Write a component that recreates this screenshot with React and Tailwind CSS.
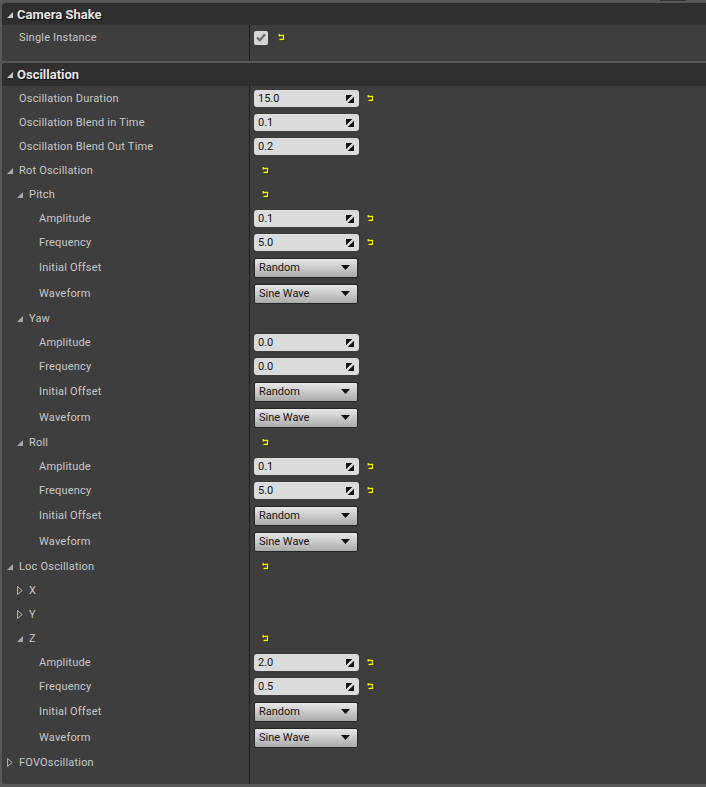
import React from "react";

// UE4-style details panel: Camera Shake / Oscillation
const rows = [
  { label: "Oscillation Duration", level: 0, num: "15.0", reset: true },
  { label: "Oscillation Blend in Time", level: 0, num: "0.1" },
  { label: "Oscillation Blend Out Time", level: 0, num: "0.2" },
  { label: "Rot Oscillation", level: 0, tri: "open", reset: true },
  { label: "Pitch", level: 1, tri: "open", reset: true },
  { label: "Amplitude", level: 2, num: "0.1", reset: true },
  { label: "Frequency", level: 2, num: "5.0", reset: true },
  { label: "Initial Offset", level: 2, combo: "Random" },
  { label: "Waveform", level: 2, combo: "Sine Wave" },
  { label: "Yaw", level: 1, tri: "open" },
  { label: "Amplitude", level: 2, num: "0.0" },
  { label: "Frequency", level: 2, num: "0.0" },
  { label: "Initial Offset", level: 2, combo: "Random" },
  { label: "Waveform", level: 2, combo: "Sine Wave" },
  { label: "Roll", level: 1, tri: "open", reset: true },
  { label: "Amplitude", level: 2, num: "0.1", reset: true },
  { label: "Frequency", level: 2, num: "5.0", reset: true },
  { label: "Initial Offset", level: 2, combo: "Random" },
  { label: "Waveform", level: 2, combo: "Sine Wave" },
  { label: "Loc Oscillation", level: 0, tri: "open", reset: true },
  { label: "X", level: 1, tri: "closed" },
  { label: "Y", level: 1, tri: "closed" },
  { label: "Z", level: 1, tri: "open", reset: true },
  { label: "Amplitude", level: 2, num: "2.0", reset: true },
  { label: "Frequency", level: 2, num: "0.5", reset: true },
  { label: "Initial Offset", level: 2, combo: "Random" },
  { label: "Waveform", level: 2, combo: "Sine Wave" },
  { label: "FOVOscillation", level: 0, tri: "closed" },
];

const indent = { 0: "pl-[5px]", 1: "pl-[15px]", 2: "pl-[25px]" };

function ResetArrow() {
  return (
    <svg width="9" height="9" viewBox="0 0 9 9" className="shrink-0">
      <g transform="translate(0.6,0.8)" stroke="#000" strokeWidth="1.3" fill="none" opacity="0.7">
        <polyline points="2.5,2.5 6.5,2.5 6.5,6.5 2.5,6.5" />
        <line x1="2.5" y1="1" x2="2.5" y2="3.5" />
      </g>
      <g stroke="#f5f500" strokeWidth="1.3" fill="none">
        <polyline points="2,2.5 6.5,2.5 6.5,6.5 2.5,6.5" />
        <line x1="2.2" y1="1" x2="2.2" y2="3.6" />
      </g>
    </svg>
  );
}

function Triangle({ kind, color = "#a8a8a8" }) {
  if (kind === "open") {
    return (
      <svg width="6" height="6" viewBox="0 0 6 6">
        <polygon points="6,0 6,6 0,6" fill={color} />
      </svg>
    );
  }
  return (
    <svg width="6" height="9" viewBox="0 0 6 9">
      <polygon points="0.6,0.6 5.2,4.5 0.6,8.4" fill="none" stroke="#b4b4b4" strokeWidth="1" />
    </svg>
  );
}

function SpinIcon() {
  return (
    <svg width="8" height="8" viewBox="0 0 8 8">
      <polygon points="0,0 6.3,0 0,6.3" fill="#111" />
      <polygon points="8,1.7 8,8 1.7,8" fill="#111" />
    </svg>
  );
}

function NumBox({ value }) {
  return (
    <div className="w-[105px] h-[17px] rounded-[3px] bg-[#dcdcdc] flex items-center justify-between pl-[4px] pr-[5px] text-[#141414] text-[11px]">
      <span className="pt-[1px]">{value}</span>
      <SpinIcon />
    </div>
  );
}

function Combo({ value }) {
  return (
    <div className="w-[104px] h-[20px] rounded-[2px] border border-[#262626] bg-gradient-to-b from-[#e8e8e8] to-[#ababab] flex items-center justify-between pl-[4px] pr-[7px] text-[#141414] text-[11px]">
      <span className="pt-[1px]">{value}</span>
      <svg width="9" height="5" viewBox="0 0 9 5">
        <polygon points="0,0 9,0 4.5,5" fill="#111" />
      </svg>
    </div>
  );
}

function Row({ row }) {
  const h = row.combo ? "h-[26px]" : "h-[24px]";
  return (
    <div className={`flex ${h}`}>
      <div className={`w-[248px] border-r border-[#1c1c1c] flex items-center ${indent[row.level]}`}>
        <div className="w-[12px] flex items-center pt-[1px]">
          {row.tri ? <Triangle kind={row.tri} /> : null}
        </div>
        <span className="pt-[2px] text-[#c8c8c8] text-[11px] tracking-[0.2px]">{row.label}</span>
      </div>
      <div className="flex-1 flex items-center pl-[4px] pt-[1px]">
        {row.num ? <NumBox value={row.num} /> : null}
        {row.combo ? <Combo value={row.combo} /> : null}
        {row.reset ? (
          <div className="ml-[7px]">
            <ResetArrow />
          </div>
        ) : null}
      </div>
    </div>
  );
}

function Header({ title, h }) {
  return (
    <div className={`${h} bg-[#2f2f2f] rounded-tl-[3px] flex items-center pl-[5px]`}>
      <div className="w-[10px] flex items-center pt-[1px]">
        <Triangle kind="open" color="#c8c8c8" />
      </div>
      <span className="pt-[1px] text-[#e6e6e6] text-[13px] font-bold [text-shadow:1px_1px_1px_#000]">{title}</span>
    </div>
  );
}

export default function App() {
  return (
    <div className="w-[706px] h-[787px] bg-[#575757] overflow-hidden font-['Roboto',sans-serif] select-none">
      {/* top strip */}
      <div className="h-[3px] flex">
        <div className="ml-auto mr-[20px] w-[26px] h-[1px] bg-[#333]" />
      </div>

      {/* Camera Shake */}
      <div className="ml-[2px]">
        <Header title="Camera Shake" h="h-[22px]" />
        <div className="bg-[#3e3e3e]">
          <div className="flex h-[24px]">
            <div className="w-[248px] border-r border-[#1c1c1c] flex items-center pl-[17px]">
              <span className="pt-[2px] text-[#c8c8c8] text-[11px] tracking-[0.2px]">Single Instance</span>
            </div>
            <div className="flex-1 flex items-center pl-[4px] pt-[1px]">
              <div className="w-[14px] h-[14px] rounded-[2px] bg-[#d6d6d6] flex items-center justify-center">
                <svg width="10" height="9" viewBox="0 0 10 9">
                  <polyline points="1,4.5 3.8,7.2 9,1.2" fill="none" stroke="#6a6a6a" strokeWidth="2.2" />
                </svg>
              </div>
              <div className="ml-[9px]">
                <ResetArrow />
              </div>
            </div>
          </div>
          <div className="flex h-[12px]">
            <div className="w-[248px] border-r border-[#1c1c1c]" />
          </div>
        </div>
      </div>

      <div className="h-[2px]" />

      {/* Oscillation */}
      <div className="ml-[2px] rounded-bl-[3px] overflow-hidden">
        <Header title="Oscillation" h="h-[23px]" />
        <div className="bg-[#3e3e3e]">
          {rows.map((r, i) => (
            <Row key={i} row={r} />
          ))}
          <div className="flex h-[10px]">
            <div className="w-[248px] border-r border-[#1c1c1c]" />
          </div>
        </div>
      </div>
    </div>
  );
}
